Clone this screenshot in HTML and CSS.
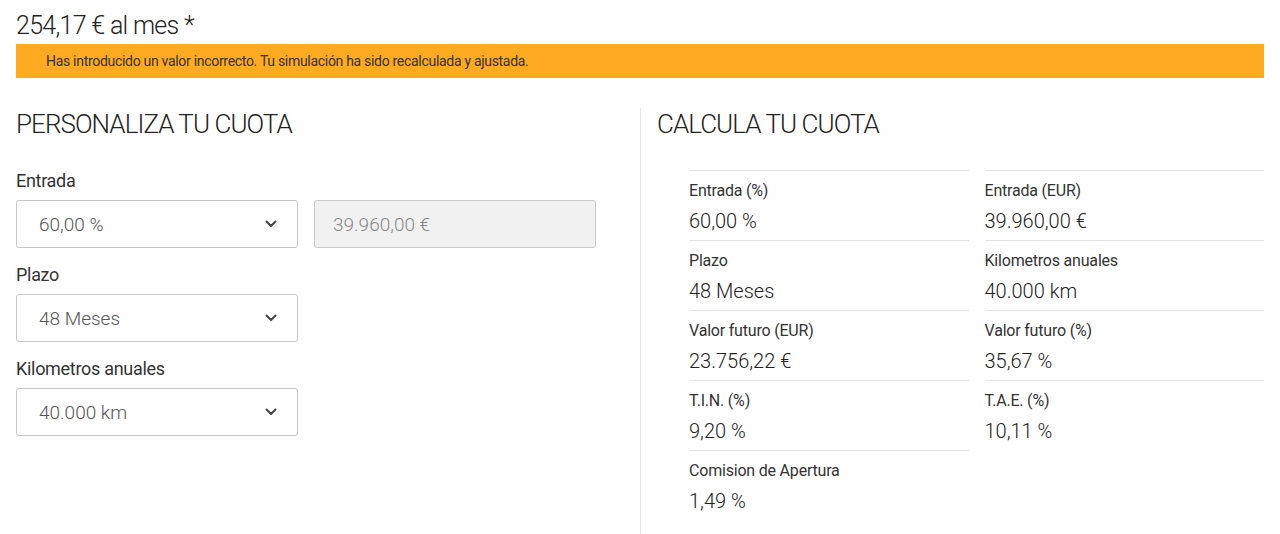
FILE: index.html
```html
<!DOCTYPE html>
<html lang="es">
<head>
<meta charset="utf-8">
<title>Cuota</title>
<link rel="stylesheet" href="styles.css">
</head>
<body>
  <h1 class="price">254,17 € al mes *</h1>
  <div class="alert">Has introducido un valor incorrecto. Tu simulación ha sido recalculada y ajustada.</div>

  <div class="columns">
    <section class="col-left">
      <h2 class="section-title">PERSONALIZA TU CUOTA</h2>

      <div class="field">
        <label class="field-label">Entrada</label>
        <div class="field-row">
          <div class="select">
            <span>60,00 %</span>
            <svg class="chev" width="12" height="8" viewBox="0 0 12 8"><path d="M1.5 1.5 L6 6 L10.5 1.5" fill="none" stroke="#444" stroke-width="2" stroke-linecap="round" stroke-linejoin="round"/></svg>
          </div>
          <div class="input disabled">39.960,00 €</div>
        </div>
      </div>

      <div class="field">
        <label class="field-label">Plazo</label>
        <div class="field-row">
          <div class="select">
            <span>48 Meses</span>
            <svg class="chev" width="12" height="8" viewBox="0 0 12 8"><path d="M1.5 1.5 L6 6 L10.5 1.5" fill="none" stroke="#444" stroke-width="2" stroke-linecap="round" stroke-linejoin="round"/></svg>
          </div>
        </div>
      </div>

      <div class="field">
        <label class="field-label">Kilometros anuales</label>
        <div class="field-row">
          <div class="select">
            <span>40.000 km</span>
            <svg class="chev" width="12" height="8" viewBox="0 0 12 8"><path d="M1.5 1.5 L6 6 L10.5 1.5" fill="none" stroke="#444" stroke-width="2" stroke-linecap="round" stroke-linejoin="round"/></svg>
          </div>
        </div>
      </div>
    </section>

    <section class="col-right">
      <h2 class="section-title">CALCULA TU CUOTA</h2>
      <div class="summary">
        <div class="item"><div class="item-label">Entrada (%)</div><div class="item-value">60,00 %</div></div>
        <div class="item"><div class="item-label">Entrada (EUR)</div><div class="item-value">39.960,00 €</div></div>
        <div class="item"><div class="item-label">Plazo</div><div class="item-value">48 Meses</div></div>
        <div class="item"><div class="item-label">Kilometros anuales</div><div class="item-value">40.000 km</div></div>
        <div class="item"><div class="item-label">Valor futuro (EUR)</div><div class="item-value">23.756,22 €</div></div>
        <div class="item"><div class="item-label">Valor futuro (%)</div><div class="item-value">35,67 %</div></div>
        <div class="item"><div class="item-label">T.I.N. (%)</div><div class="item-value">9,20 %</div></div>
        <div class="item"><div class="item-label">T.A.E. (%)</div><div class="item-value">10,11 %</div></div>
        <div class="item"><div class="item-label">Comision de Apertura</div><div class="item-value">1,49 %</div></div>
      </div>
    </section>
  </div>
</body>
</html>
```

FILE: styles.css
```css
* { box-sizing: border-box; }

html, body {
  margin: 0;
  padding: 0;
  background: #fff;
}

body {
  padding: 0 16px;
  font-family: Roboto, "Noto Sans", sans-serif;
  color: #333;
  overflow: hidden;
  height: 534px;
}

.price {
  margin: 0;
  padding-top: 10px;
  font-size: 25px;
  line-height: 32px;
  font-weight: 300;
  letter-spacing: -0.7px;
  color: #222;
}

.alert {
  margin-top: 2px;
  height: 34px;
  background: #ffaa20;
  color: #333;
  font-size: 14px;
  letter-spacing: -0.3px;
  line-height: 34px;
  padding-left: 30px;
}

.columns {
  display: grid;
  grid-template-columns: 1fr 1fr;
  margin-top: 30px;
  height: 426px;
}

.section-title {
  margin: 0;
  font-size: 26px;
  line-height: 32px;
  font-weight: 300;
  letter-spacing: -0.95px;
  color: #222;
}

.col-right {
  border-left: 1px solid #e6e6e6;
  padding-left: 16px;
}

.field {
  margin-top: 14px;
}

.col-left .section-title + .field {
  margin-top: 28px;
}

.field-label {
  display: block;
  font-size: 18px;
  line-height: 26px;
  margin-bottom: 6px;
  letter-spacing: -0.3px;
  color: #333;
}

.field-row {
  display: flex;
  gap: 16px;
}

.select, .input {
  width: 282px;
  height: 48px;
  border: 1px solid #c8c8c8;
  border-radius: 3px;
  display: flex;
  align-items: center;
  justify-content: space-between;
  padding: 0 20px 0 22px;
  font-size: 19px;
  font-weight: 300;
  color: #555;
}

.input.disabled {
  background: #f1f1f1;
  color: #888;
  justify-content: flex-start;
  padding-left: 18px;
}

.chev {
  display: block;
}

.summary {
  margin-top: 30px;
  margin-left: 32px;
  display: grid;
  grid-template-columns: 1fr 1fr;
  column-gap: 16px;
}

.item {
  border-top: 1px solid #e3e3e3;
  height: 70px;
  padding-top: 9px;
}

.item-label {
  font-size: 16px;
  line-height: 22px;
  letter-spacing: -0.2px;
  color: #333;
}

.item-value {
  margin-top: 6px;
  font-size: 20px;
  line-height: 26px;
  font-weight: 300;
  color: #222;
}
```
